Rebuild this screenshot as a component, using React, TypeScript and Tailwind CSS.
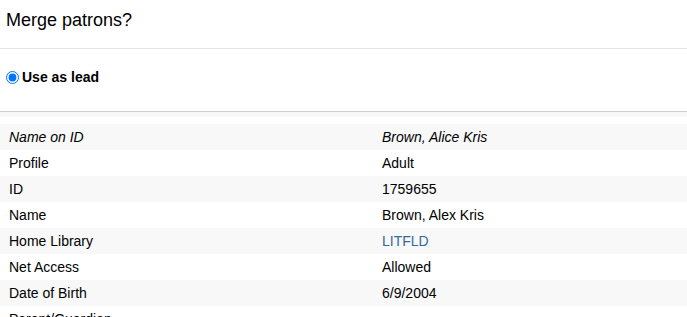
import React from 'react';

interface Row {
  label: string;
  value: string;
  italic?: boolean;
  link?: boolean;
}

const rows: Row[] = [
  { label: 'Name on ID', value: 'Brown, Alice Kris', italic: true },
  { label: 'Profile', value: 'Adult' },
  { label: 'ID', value: '1759655' },
  { label: 'Name', value: 'Brown, Alex Kris' },
  { label: 'Home Library', value: 'LITFLD', link: true },
  { label: 'Net Access', value: 'Allowed' },
  { label: 'Date of Birth', value: '6/9/2004' },
  { label: 'Parent/Guardian', value: '' },
];

export default function App() {
  return (
    <div className="h-[317px] overflow-hidden bg-white text-black" style={{ fontFamily: '"Liberation Sans", Arial, sans-serif' }}>
      <div className="h-[49px] border-b border-[#e5e5e5] px-[6px] pt-[9px]">
        <h2 className="text-[18px] leading-[22px]">Merge patrons?</h2>
      </div>
      <div className="h-[63px] border-b border-[#cfcfcf] px-[6px] pt-[18px]">
        <label className="flex items-center gap-[3px] text-[14px] font-bold">
          <input type="radio" defaultChecked className="m-0 h-[13px] w-[13px] accent-[#0075ff]" />
          Use as lead
        </label>
      </div>
      <div className="h-[5px] bg-[#f8f8f8]" />
      <div className="h-[7px]" />
      <div className="text-[14px]">
        {rows.map((r, i) => (
          <div
            key={r.label}
            className={`grid h-[26px] grid-cols-[373px_1fr] items-center px-[9px] ${i % 2 === 0 ? 'bg-[#f8f8f8]' : 'bg-white'}`}
          >
            <span className={r.italic ? 'italic' : ''}>{r.label}</span>
            <span className={`${r.italic ? 'italic' : ''} ${r.link ? 'text-[#35699c]' : ''}`}>{r.value}</span>
          </div>
        ))}
      </div>
    </div>
  );
}
